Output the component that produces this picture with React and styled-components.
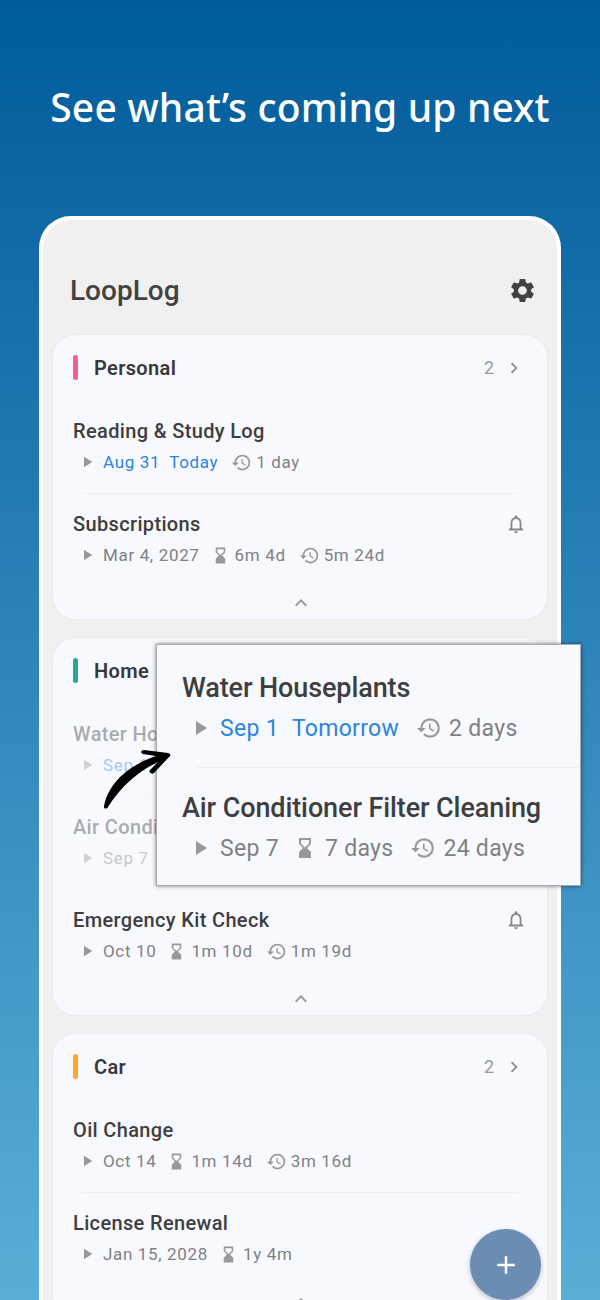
import styled, { createGlobalStyle } from "styled-components";
import {
  MdSettings,
  MdPlayArrow,
  MdHistory,
  MdHourglassBottom,
  MdOutlineNotifications,
  MdChevronRight,
  MdExpandLess,
  MdAdd,
} from "react-icons/md";

const groups = [
  {
    name: "Personal",
    color: "#f0608f",
    count: 2,
    items: [
      { title: "Reading & Study Log", date: "Aug 31", today: "Today", since: "1 day" },
      { title: "Subscriptions", date: "Mar 4, 2027", left: "6m 4d", since: "5m 24d", bell: true },
    ],
  },
  {
    name: "Home",
    color: "#26a69a",
    count: 3,
    items: [
      { title: "Water Houseplants", date: "Sep 1", today: "Tomorrow", since: "2 days", dim: true },
      { title: "Air Conditioner Filter Cleaning", date: "Sep 7", left: "7 days", since: "24 days", dim: true },
      { title: "Emergency Kit Check", date: "Oct 10", left: "1m 10d", since: "1m 19d", bell: true },
    ],
  },
  {
    name: "Car",
    color: "#ffa726",
    count: 2,
    items: [
      { title: "Oil Change", date: "Oct 14", left: "1m 14d", since: "3m 16d" },
      { title: "License Renewal", date: "Jan 15, 2028", left: "1y 4m" },
    ],
  },
];

const popupItems = groups[1].items.slice(0, 2);

function Meta({ item, $big }) {
  return (
    <MetaRow $big={$big}>
      <Play $big={$big} />
      {item.today ? (
        <DueText $big={$big}>
          <span>{item.date}</span>
          <span>{item.today}</span>
        </DueText>
      ) : (
        <MetaText>{item.date}</MetaText>
      )}
      {item.left && (
        <HourglassGroup $big={$big}>
          <Hourglass $big={$big} />
          <MetaText>{item.left}</MetaText>
        </HourglassGroup>
      )}
      {item.since && (
        <MetaGroup $big={$big}>
          <History $big={$big} />
          <MetaText>{item.since}</MetaText>
        </MetaGroup>
      )}
    </MetaRow>
  );
}

export default function App() {
  return (
    <Page>
      <GlobalStyle />
      <Headline>See what’s coming up next</Headline>
      <Phone>
        <AppBar>
          <Logo>LoopLog</Logo>
          <MdSettings size={29} />
        </AppBar>
        <Cards>
          {groups.map((group) => (
            <Card key={group.name}>
              <CardHeader>
                <Accent $color={group.color} />
                <GroupName>{group.name}</GroupName>
                <Count>{group.count}</Count>
                <MdChevronRight size={22} color="#8e8e93" />
              </CardHeader>
              <Items>
                {group.items.map((item) => (
                  <Item key={item.title} $dim={item.dim}>
                    <TitleRow>
                      <ItemTitle>{item.title}</ItemTitle>
                      {item.bell && <MdOutlineNotifications size={22} color="#8a8a8e" />}
                    </TitleRow>
                    <Meta item={item} />
                  </Item>
                ))}
              </Items>
              <Collapse>
                <MdExpandLess size={24} color="#9a9a9e" />
              </Collapse>
            </Card>
          ))}
        </Cards>
      </Phone>
      <Popup>
        {popupItems.map((item) => (
          <PopupItem key={item.title}>
            <ItemTitle $big>{item.title}</ItemTitle>
            <Meta item={item} $big />
          </PopupItem>
        ))}
      </Popup>
      <Arrow viewBox="0 0 75 70">
        <path d="M4 62C7 42 24 22 56 11L43 9C40 8 41 5 44 5L68 8C71 9 71 11 69 12L54 28C52 30 48 27 50 25L58 17C40 25 20 42 8 62C7 64 4 64 4 62Z" />
      </Arrow>
      <Fab>
        <MdAdd size={30} color="#fff" />
      </Fab>
    </Page>
  );
}

const GlobalStyle = createGlobalStyle`
  html, body {
    margin: 0;
    padding: 0;
  }
  * {
    box-sizing: border-box;
  }
`;

const Page = styled.div`
  position: relative;
  width: 600px;
  height: 1300px;
  overflow: hidden;
  padding: 84px 39px 0;
  background: linear-gradient(180deg, #005b9b 0%, #5aaed6 100%);
  font-family: Roboto, sans-serif;
`;

const Headline = styled.h1`
  margin: 0 -20px;
  height: 46px;
  font-family: "Noto Sans", sans-serif;
  font-size: 39px;
  line-height: 46px;
  font-weight: 500;
  letter-spacing: 0.15px;
  text-align: center;
  white-space: nowrap;
  color: #fff;
`;

const Phone = styled.div`
  margin-top: 86px;
  height: 1200px;
  padding: 0 9px;
  background: #f0f0f0;
  border: 4px solid #fff;
  border-bottom: 0;
  border-radius: 32px 32px 0 0;
`;

const AppBar = styled.div`
  height: 114px;
  padding: 27px 11px 0 18px;
  display: flex;
  align-items: center;
  justify-content: space-between;
  color: #424242;
`;

const Logo = styled.div`
  font-size: 28px;
  font-weight: 500;
  color: #424242;
`;

const Cards = styled.div`
  display: flex;
  flex-direction: column;
  gap: 17px;
`;

const Card = styled.section`
  padding: 0 18px 0 20px;
  background: #f8f9ff;
  border: 1px solid #ebebef;
  border-radius: 24px;
`;

const CardHeader = styled.div`
  height: 65px;
  padding-right: 4px;
  display: flex;
  align-items: center;
  color: #333;
`;

const Accent = styled.span`
  width: 5px;
  height: 25px;
  margin-right: 16px;
  border-radius: 3px;
  background: ${(p) => p.$color};
`;

const GroupName = styled.div`
  flex: 1;
  font-size: 20px;
  font-weight: 600;
  letter-spacing: 0.35px;
  color: #38383a;
`;

const Count = styled.span`
  margin-right: 9px;
  font-size: 18px;
  color: #98989c;
`;

const Items = styled.div`
  display: flex;
  flex-direction: column;
`;

const Item = styled.div`
  height: 93px;
  padding-top: 16px;
  opacity: ${(p) => (p.$dim ? 0.42 : 1)};
  & + & {
    position: relative;
    &::before {
      content: "";
      position: absolute;
      top: 0;
      left: 10px;
      right: 12px;
      height: 1px;
      background: #eeeef2;
    }
  }
`;

const TitleRow = styled.div`
  display: flex;
  align-items: center;
  justify-content: space-between;
  padding-right: 2px;
`;

const ItemTitle = styled.div`
  font-size: ${(p) => (p.$big ? "27px" : "20px")};
  line-height: ${(p) => (p.$big ? "36px" : "30px")};
  font-weight: 500;
  letter-spacing: ${(p) => (p.$big ? "-0.1px" : "0.35px")};
  white-space: nowrap;
  color: #3e3e40;
`;

const MetaRow = styled.div`
  display: flex;
  align-items: center;
  height: ${(p) => (p.$big ? "30px" : "26px")};
  margin-top: ${(p) => (p.$big ? "7px" : "3px")};
  padding-left: ${(p) => (p.$big ? "6px" : "5px")};
  font-size: ${(p) => (p.$big ? "23px" : "17px")};
  letter-spacing: ${(p) => (p.$big ? "0.3px" : "0.65px")};
  white-space: nowrap;
  color: #808084;
`;

const Play = styled(MdPlayArrow)`
  flex: none;
  width: ${(p) => (p.$big ? "24px" : "18px")};
  height: ${(p) => (p.$big ? "24px" : "18px")};
  margin-right: ${(p) => (p.$big ? "8px" : "7px")};
  color: #98989c;
`;

const DueText = styled.span`
  display: flex;
  gap: ${(p) => (p.$big ? "13px" : "9px")};
  color: #2a84e0;
`;

const MetaText = styled.span``;

const MetaGroup = styled.span`
  display: flex;
  align-items: center;
  margin-left: ${(p) => (p.$big ? "17px" : "13px")};
  gap: ${(p) => (p.$big ? "7px" : "4px")};
`;

const HourglassGroup = styled(MetaGroup)`
  margin-left: ${(p) => (p.$big ? "14px" : "11px")};
  gap: ${(p) => (p.$big ? "8px" : "5px")};
`;

const Hourglass = styled(MdHourglassBottom)`
  width: ${(p) => (p.$big ? "24px" : "19px")};
  height: ${(p) => (p.$big ? "24px" : "19px")};
  color: #98989c;
`;

const History = styled(MdHistory)`
  width: ${(p) => (p.$big ? "26px" : "21px")};
  height: ${(p) => (p.$big ? "26px" : "21px")};
  color: #98989c;
`;

const Collapse = styled.div`
  display: flex;
  align-items: center;
  justify-content: center;
  height: 33px;
`;

const Popup = styled.div`
  position: absolute;
  left: 156px;
  top: 644px;
  width: 425px;
  height: 242px;
  background: #f8f9ff;
  border: 1px solid #a9abaf;
  box-shadow: 0 0 4px rgba(0, 0, 0, 0.55);
`;

const PopupItem = styled.div`
  position: relative;
  height: 122px;
  padding: 25px 0 0 25px;
  & + & {
    height: 118px;
    padding-top: 23px;
    &::before {
      content: "";
      position: absolute;
      top: 0;
      left: 39px;
      right: 0;
      height: 1px;
      background: #eeeef2;
    }
  }
`;

const Arrow = styled.svg`
  position: absolute;
  left: 100px;
  top: 745px;
  width: 75px;
  height: 70px;
  fill: #000;
`;

const Fab = styled.div`
  position: absolute;
  left: 470px;
  top: 1229px;
  width: 71px;
  height: 71px;
  display: flex;
  align-items: center;
  justify-content: center;
  border-radius: 50%;
  background: #6b8cb3;
  box-shadow: 0 2px 5px rgba(0, 0, 0, 0.25);
`;
